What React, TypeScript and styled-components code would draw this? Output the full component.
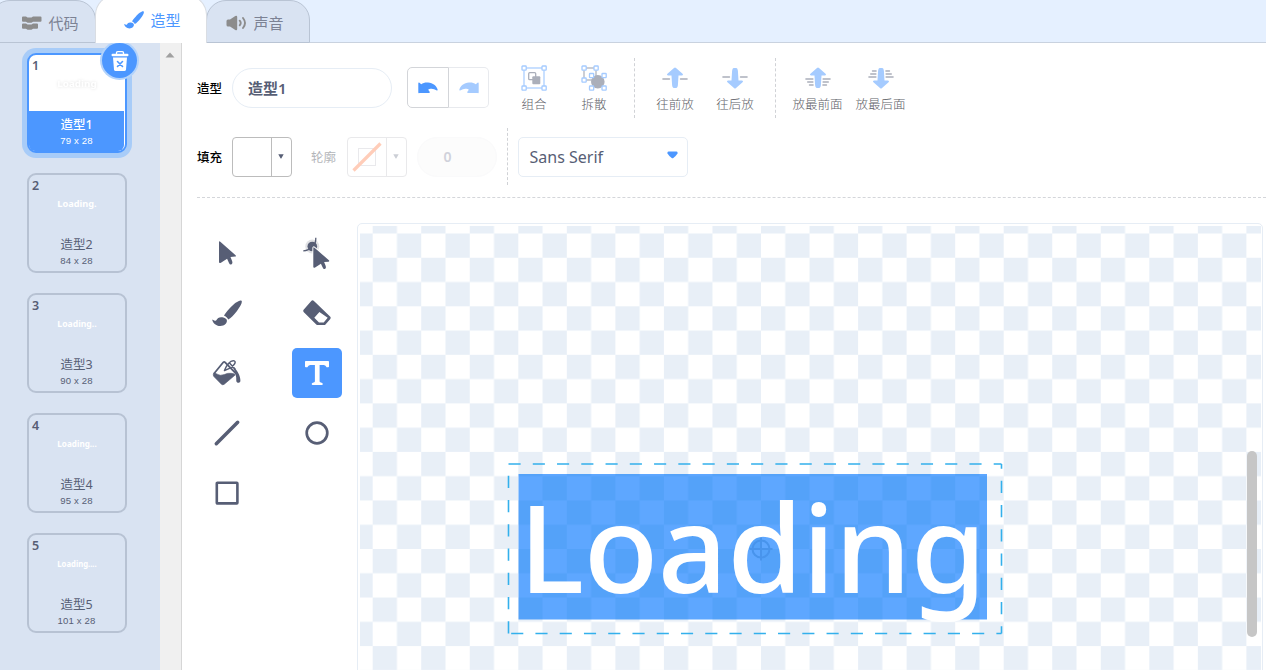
import React from 'react';
import styled, { createGlobalStyle } from 'styled-components';

const INK = '#575e75';
const BLUE = '#4c97ff';

const GlobalStyle = createGlobalStyle`
  * { box-sizing: border-box; }
  body {
    margin: 0;
    overflow: hidden;
    background: #fff;
    font-family: "Noto Sans", "Noto Sans CJK SC", sans-serif;
    color: ${INK};
  }
  svg { display: block; flex: none; }
`;

const Page = styled.div`
  width: 1266px;
  height: 670px;
  display: flex;
  flex-direction: column;
  overflow: hidden;
`;

const TabBar = styled.div`
  height: 43px;
  flex: none;
  display: flex;
  background: #e5f0ff;
  border-bottom: 1px solid #c9d2df;
`;

const Tab = styled.div<{ $width: number; $active?: boolean; $first?: boolean }>`
  width: ${p => p.$width}px;
  height: ${p => (p.$active ? 48 : 43)}px;
  margin-top: ${p => (p.$active ? -5 : 0)}px;
  margin-left: ${p => (p.$first ? -10 : -1)}px;
  padding: ${p => (p.$active ? '0 0 0 3px' : p.$first ? '3px 0 0 14px' : '3px 6px 0 0')};
  display: flex;
  align-items: center;
  justify-content: center;
  gap: ${p => (p.$first ? 5 : 6)}px;
  border: 1px solid ${p => (p.$active ? '#d9dde3' : '#b9c4d4')};
  border-bottom: ${p => (p.$active ? 'none' : '1px solid #b9c4d4')};
  border-radius: 20px 20px 0 0;
  background: ${p => (p.$active ? '#fff' : '#d9e3f2')};
  color: ${p => (p.$active ? BLUE : '#7c8294')};
  font: 400 15px/20px "Noto Sans CJK SC", sans-serif;
  position: relative;
  z-index: ${p => (p.$active ? 2 : 1)};
`;

const Body = styled.div`
  flex: 1;
  display: flex;
  min-height: 0;
`;

const CostumeList = styled.div`
  width: 160px;
  flex: none;
  padding: 10px 0 0 27px;
  display: flex;
  flex-direction: column;
  gap: 20px;
  background: #d9e3f2;
`;

const ListScrollbar = styled.div`
  width: 22px;
  flex: none;
  padding: 9px 0 0 5px;
  background: #f0f0f0;
  border-right: 1px solid #d6d6d6;
`;

const Card = styled.div<{ $selected?: boolean }>`
  position: relative;
  width: 100px;
  height: 100px;
  flex: none;
  display: flex;
  flex-direction: column;
  border: 2px solid ${p => (p.$selected ? BLUE : '#b7c2d3')};
  border-radius: 9px;
  background: ${p => (p.$selected ? '#fff' : 'transparent')};
  box-shadow: ${p => (p.$selected ? '0 0 0 5px #a8ccf8' : 'none')};
  color: ${p => (p.$selected ? '#fff' : INK)};
`;

const CardNumber = styled.div`
  height: 18px;
  padding: 3px 0 0 3px;
  font: 600 12.5px/15px "Noto Sans", sans-serif;
  color: ${INK};
`;

const CardPreview = styled.svg<{ $selected?: boolean }>`
  width: 96px;
  height: 38px;
  font: 700 9px "Noto Sans", sans-serif;
  fill: #fff;
  filter: ${p => (p.$selected ? 'drop-shadow(0 0 1.5px rgba(0,0,0,0.12))' : 'none')};
`;

const CardInfo = styled.div<{ $selected?: boolean }>`
  flex: 1;
  padding-top: 5px;
  margin-right: 1px;
  border-radius: 0 0 6px 6px;
  text-align: center;
  background: ${p => (p.$selected ? BLUE : 'transparent')};
`;

const CardName = styled.div<{ $selected?: boolean }>`
  font: ${p => (p.$selected ? 500 : 400)} 12.5px/18px "Noto Sans", "Noto Sans CJK SC", sans-serif;
`;

const CardSize = styled.div`
  font: 400 9.6px/14px "Liberation Sans", sans-serif;
  letter-spacing: 0.15px;
`;

const DeleteBadge = styled.div`
  position: absolute;
  top: -12px;
  right: -12px;
  width: 35px;
  height: 35px;
  border-radius: 50%;
  display: flex;
  align-items: center;
  justify-content: center;
  background: ${BLUE};
  box-shadow: 0 0 0 2px #b3d3fb;
`;

const Editor = styled.div`
  flex: 1;
  min-width: 0;
  padding-left: 15px;
  display: flex;
  flex-direction: column;
`;

const Toolbar = styled.div`
  height: 155px;
  flex: none;
  padding-top: 15px;
  display: flex;
  flex-direction: column;
  gap: 10px;
  border-bottom: 1px dashed #d4d6da;
`;

const ToolbarRow = styled.div<{ $height: number }>`
  height: ${p => p.$height}px;
  display: flex;
  align-items: center;
`;

const Label = styled.span<{ $muted?: boolean }>`
  width: ${p => (p.$muted ? 36 : 35)}px;
  flex: none;
  margin-left: ${p => (p.$muted ? 19 : 0)}px;
  font: ${p => (p.$muted ? 400 : 500)} 12.5px/18px "Noto Sans CJK SC", sans-serif;
  color: ${p => (p.$muted ? '#b4b6ba' : '#000')};
`;

const NameField = styled.div`
  width: 160px;
  height: 40px;
  padding-left: 15px;
  border: 1px solid #e6edf5;
  border-radius: 20px;
  font: 600 15px/38px "Noto Sans", "Noto Sans CJK SC", sans-serif;
`;

const HistoryGroup = styled.div`
  display: flex;
  margin: -1px 0 0 15px;
`;

const HistoryButton = styled.div<{ $disabled?: boolean }>`
  width: ${p => (p.$disabled ? 40 : 42)}px;
  height: 41px;
  display: flex;
  align-items: center;
  justify-content: center;
  border: 1px solid ${p => (p.$disabled ? '#e8eaee' : '#d3d5d9')};
  border-left-width: ${p => (p.$disabled ? 0 : 1)}px;
  border-radius: ${p => (p.$disabled ? '0 5px 5px 0' : '5px 0 0 5px')};
  color: ${p => (p.$disabled ? '#a5cbff' : BLUE)};
`;

const Actions = styled.div`
  display: flex;
  margin: 0 10px 0 15px;
`;

const Action = styled.div<{ $width?: number }>`
  width: ${p => p.$width ?? 60}px;
  padding-top: 1px;
  display: flex;
  flex-direction: column;
  align-items: center;
  gap: 4px;
  font: 300 12.5px/18px "Noto Sans CJK SC", sans-serif;
  color: #5e6168;
`;

const Separator = styled.div<{ $height: number }>`
  width: 1px;
  height: ${p => p.$height}px;
  border-left: 1px dashed #d0d2d6;
  & + * { margin-left: 10px; }
`;

const Swatch = styled.div<{ $disabled?: boolean }>`
  width: 60px;
  height: 40px;
  display: flex;
  border: 1px solid ${p => (p.$disabled ? '#e9e9eb' : '#bcbcbc')};
  border-radius: 4px;
  color: ${p => (p.$disabled ? '#cccfd6' : INK)};
`;

const SwatchColor = styled.div<{ $disabled?: boolean }>`
  width: 39px;
  display: flex;
  align-items: center;
  justify-content: center;
  border-right: 1px solid ${p => (p.$disabled ? '#e9e9eb' : '#bcbcbc')};
`;

const SwatchArrow = styled.div`
  flex: 1;
  display: flex;
  align-items: center;
  justify-content: center;
  padding: 0 1px 1px 0;
`;

const OutlineWidth = styled.div`
  width: 80px;
  height: 40px;
  margin: 0 10px;
  padding-right: 19px;
  border: 1px solid #fafafb;
  border-radius: 20px;
  background: #fcfcfc;
  text-align: center;
  font: 600 14px/38px "Noto Sans", sans-serif;
  color: #d0d2db;
`;

const FontSelect = styled.div`
  width: 170px;
  height: 40px;
  padding: 0 9px 0 10.5px;
  display: flex;
  align-items: center;
  justify-content: space-between;
  border: 1px solid #e6edf5;
  border-radius: 5px;
  font: 400 16px/38px "Noto Sans", sans-serif;
`;

const SelectArrow = styled.svg`
  width: 11px;
  height: 8px;
  margin-bottom: 3px;
`;

const Workspace = styled.div`
  flex: 1;
  min-height: 0;
  display: flex;
  padding-top: 25px;
`;

const ToolGrid = styled.div`
  width: 160px;
  flex: none;
  display: grid;
  grid-template-columns: 50px 50px;
  grid-auto-rows: 50px;
  gap: 10px 40px;
  padding-left: 5px;
  padding-top: 5px;
  align-content: start;
`;

const ToolButton = styled.div<{ $active?: boolean }>`
  display: flex;
  align-items: center;
  justify-content: center;
  border-radius: 5px;
  background: ${p => (p.$active ? BLUE : 'transparent')};
  color: ${p => (p.$active ? '#fff' : INK)};
`;

const CanvasFrame = styled.div`
  width: 906px;
  height: 460px;
  flex: none;
  padding: 2px;
  border: 1px solid #e6edf5;
  border-radius: 5px;
`;

const CodeIcon = () => (
  <svg width="22" height="16" viewBox="0 0 22 16" fill="#8c8c8c">
    <path d="M2 1.500h3l1.500 1h4l1.500-1h7.500q1 0 1 1v3.300q0 1-1 1H12l-1.500 1h-4L5 6.800H2q-1 0-1-1V2.500q0-1 1-1z" />
    <path d="M2 8.500h3l1.500 1h4l1.500-1h4q1 0 1 1v3.300q0 1-1 1h-4l-1.500 1h-4l-1.500-1H2q-1 0-1-1V9.500q0-1 1-1z" />
  </svg>
);

const BrushIcon = ({ size }: { size: number }) => (
  <svg width={size} height={size * 0.9} viewBox="0 0 30 27" fill="currentColor">
    <path d="M29.500.7C27.500-.5 22 3.500 17.500 8.500c-2.500 2.700-4.700 5.300-5.500 7.200 1.800.5 3.500 2 4.200 3.900 2.500-1.500 6-4.900 8.600-8.400C28.400 6.400 30.800 2 29.500.7z" />
    <path d="M10.400 17.300c-3-.5-5 .7-5.900 2.800C3.800 21.500 2.500 20.500.3 19.500c0 3 3.700 6.600 8 6.600 4.200 0 6.800-2.800 6.600-5.500-.1-1.700-2-3-4.500-3.300z" />
  </svg>
);

const SoundIcon = () => (
  <svg width="21" height="16" viewBox="0 0 21 16" fill="#8c8c8c">
    <path d="M2 4.500h2L9.300.9q1.900-.8 1.900 1v12.200q0 1.800-1.900 1L4 11.500H2Q.5 11.500.5 10V6Q.5 4.500 2 4.500z" />
    <path d="M13.700 5.700q2 2.300 0 4.600M17 3q4 5 0 10" fill="none" stroke="#8c8c8c" strokeWidth="1.900" strokeLinecap="round" />
  </svg>
);

const TrashIcon = () => (
  <svg width="18" height="20" viewBox="0 0 18 20">
    <path d="M5.500 3.300V2q0-1.300 1.300-1.300h4.400Q12.500.7 12.500 2v1.300" fill="none" stroke="#fff" strokeWidth="1.300" />
    <rect x=".5" y="2.800" width="17" height="2.500" rx="1.200" fill="#fff" />
    <path d="M2 6.500h14l-1 12q-.2 1.500-1.700 1.500H4.700Q3.200 20 3 18.500z" fill="#fff" />
    <path d="m6.500 10.500 5 5m0-5-5 5" stroke={BLUE} strokeWidth="1.600" strokeLinecap="round" />
  </svg>
);

const UndoIcon = ({ flip }: { flip?: boolean }) => (
  <svg width="20" height="12" viewBox="0 0 20 12" fill="currentColor">
    <path
      transform={flip ? 'translate(20 0) scale(-1 1)' : undefined}
      d="M.3 1.400Q.3.1 1.500.7l1.700 1.500C5 .8 7.400.3 10 .5c5 .4 8.700 3.400 9.600 7 .2.900-.5 1.300-1.200.8-2.300-1.600-4.700-2-7.100-1.200-1 .3-1.200.8-.6 1.400l.8.900q.9 1-.4 1.600H1.400Q.3 11.600.3 10.300z"
    />
  </svg>
);

const Handle = ({ x, y }: { x: number; y: number }) => (
  <rect x={x - 2} y={y - 2} width="4.200" height="4.200" rx=".6" fill="#fff" stroke="#a5cbff" strokeWidth="1.300" />
);

const GroupIcon = () => (
  <svg width="26" height="26" viewBox="0 0 26 26">
    <rect x="3" y="3" width="20" height="20" fill="none" stroke="#a5cbff" strokeWidth="1.200" />
    <rect x="7.700" y="7.700" width="7" height="7" rx="1" fill="#fff" stroke="#abafba" strokeWidth="1.300" />
    <rect x="11.300" y="11.300" width="8" height="8" rx="1" fill="#abafba" />
    <Handle x={3} y={3} /><Handle x={23} y={3} /><Handle x={3} y={23} /><Handle x={23} y={23} />
  </svg>
);

const UngroupIcon = () => (
  <svg width="26" height="26" viewBox="0 0 26 26">
    <rect x="3" y="3" width="12" height="12" fill="none" stroke="#abafba" strokeWidth="1.200" />
    <circle cx="16.800" cy="16.800" r="6.800" fill="#abafba" />
    <Handle x={3} y={3} /><Handle x={15} y={3} /><Handle x={3} y={15} />
    <Handle x={10.500} y={10.500} /><Handle x={23} y={10.500} /><Handle x={10.500} y={23} /><Handle x={23} y={23} />
  </svg>
);

const UP_ARROW = 'M12 3q1-1 2 0l6.300 5.600q1.700 1.700-.6 2H16.500l-.6 9.600q-.3 2.800-1.500 2.800h-2.800q-1.200 0-1.500-2.800l-.6-9.600H6.300q-2.300-.3-.6-2z';

const ArrowIcon = ({ down, far }: { down?: boolean; far?: boolean }) => (
  <svg width="26" height="26" viewBox="0 0 26 26">
    <g transform={down ? 'rotate(180 13 13)' : undefined}>
      <path d={UP_ARROW} fill="#a5cbff" />
      <path
        d={far ? 'M.9 14h7M2.700 17h5.200M4.500 20h3.600M18.100 14h7M18.100 17h5.200M17.900 20h3.600' : 'M.9 14h6.600M18.500 14h6.600'}
        stroke="#abafba" strokeWidth="1.400" strokeLinecap="round"
      />
    </g>
  </svg>
);

const SmallArrow = () => (
  <svg width="6" height="5" viewBox="0 0 6 5"><path d="M.3.3h5.400L3.300 4.600h-.6z" fill="currentColor" /></svg>
);

const NoColorIcon = () => (
  <svg width="32" height="32" viewBox="0 0 32 32">
    <rect x="7.500" y="7.500" width="17" height="17" fill="none" stroke="#e9e9ec" />
    <path d="M2.500 29.500 29.500 2.500" stroke="#ffcdb9" strokeWidth="3.200" />
  </svg>
);

const CURSOR = 'M0 1.200Q0-.4 1.300.7l15.300 13.500q.9 1.100-.5 1.400l-4.600.4 1.500 3.700q1 2.500-.4 3.500-1.700 1-2.600-1.300L8.100 17.800l-6.200 4Q0 22.600 0 21z';

const SelectIcon = () => (
  <svg width="30" height="30" viewBox="0 0 30 30"><path d={CURSOR} transform="translate(7 3)" fill="currentColor" /></svg>
);

const ReshapeIcon = () => (
  <svg width="34" height="36" viewBox="0 0 34 36">
    <circle cx="12.300" cy="11.500" r="7" fill="#e1e2e5" />
    <circle cx="12.300" cy="11.500" r="4.800" fill="currentColor" />
    <path d="M3.300 15.800q5.500-.2 9-4.300 3.800-2.500 3.500-8.700" fill="none" stroke="currentColor" strokeWidth="1.300" />
    <path d={CURSOR} transform="translate(13.300 12) scale(.94)" fill="currentColor" stroke="#fff" strokeWidth="2" paintOrder="stroke" />
  </svg>
);

const EraserIcon = () => (
  <svg width="30" height="30" viewBox="0 0 30 30" fill="currentColor">
    <path fillRule="evenodd" d="M9.500 2.700q1.100-.8 2.200.1l16.600 16q.9 1 0 2.100l-4.800 5.600q-.6.500-1.300.5h-6.500q-.8 0-1.400-.6L1.600 14q-.9-1.100 0-2.200zM17.400 14l-5.100 5.700 4.700 4.700h4.700l4-4.600z" />
  </svg>
);

const FillIcon = () => (
  <svg width="30" height="30" viewBox="0 0 30 30" fill="none" stroke="currentColor" strokeLinecap="round" strokeLinejoin="round">
    <path d="M2.500 15 11.300 4.300q.9-.9 1.800 0L23.500 15" strokeWidth="1.800" />
    <path d="M1.800 15.200q1.300-.6 3 .8 3.500 2.300 7.500.5 3.500-1.700 7-1.200 3 .3 4.200 1.400L12.300 26.200q-1.500 1.200-2.900 0L1.900 18.600q-1.500-1.600-.1-3.400z" fill="currentColor" strokeWidth=".6" />
    <path d="M12.500 12.500C14 7.500 18.500 1.800 22.200 2.900c3.200 1.300-2 7.100-9.700 9.600M17.500 5 23 11" strokeWidth="1.500" />
    <path d="M20.500 8.500c4.200 2 8.200 9.500 7.900 14.500-.2 2.400-3.900 2.400-4.100 0 .2-4.500-.8-9-3.800-14.500z" fill="currentColor" stroke="none" />
  </svg>
);

const TextIcon = () => (
  <svg width="26" height="26" viewBox="0 0 26 26" fill="currentColor">
    <path d="M1.800 1h22.400q.8 0 .8.800V6.500q0 .7-.8.700h-1.600q-.8-1.900-2.700-2.200h-4.300v16.500q.2 1 2 1.200 1.200.2 1.200 1.200t-1 1.100H8.700q-1-.1-1-1.100t1.200-1.200q1.900-.2 2-1.200V5H6.100Q4.200 5.300 3.400 7.200H1.800Q1 7.200 1 6.500V1.800Q1 1 1.800 1z" />
  </svg>
);

const LineIcon = () => (
  <svg width="30" height="30" viewBox="0 0 30 30"><path d="M4.300 25.700 25.700 4.300" stroke="currentColor" strokeWidth="3.500" strokeLinecap="round" /></svg>
);
const CircleIcon = () => (
  <svg width="30" height="30" viewBox="0 0 30 30"><circle cx="15" cy="15" r="10.300" fill="none" stroke="currentColor" strokeWidth="2.700" /></svg>
);
const RectIcon = () => (
  <svg width="30" height="30" viewBox="0 0 30 30"><rect x="4.800" y="4.800" width="20.600" height="20.600" rx=".6" fill="none" stroke="currentColor" strokeWidth="2.600" /></svg>
);

const ArtText = styled.text`
  font: 500 122px "Noto Sans", sans-serif;
  fill: #fff;
`;

const CELL = 24.27;

const Checker = ({ id, light, dark }: { id: string; light: string; dark: string }) => (
  <pattern id={id} width={CELL * 2} height={CELL * 2} patternUnits="userSpaceOnUse">
    <rect width={CELL * 2} height={CELL * 2} fill={light} />
    <rect width={CELL} height={CELL} fill={dark} />
    <rect x={CELL} y={CELL} width={CELL} height={CELL} fill={dark} />
  </pattern>
);

/* Coordinates inside the artwork are measured from the rotation centre. */
const Artwork = () => (
  <svg width="901" height="460" viewBox="-401 -323 901 460">
    <defs>
      <Checker id="paper" light="#fff" dark="#e8eff7" />
      <Checker id="selection" light="#5ea7ff" dark="#54a2f9" />
    </defs>
    <rect x="-401" y="-323" width="901" height="460" fill="url(#paper)" />
    <rect x="-242.500" y="-75" width="468.500" height="145.500" fill="url(#selection)" />
    <g stroke="#4894ec" strokeWidth="2" fill="none">
      <circle r="8.500" />
      <path d="M0-11.500v23M-11.500 0h23" />
    </g>
    <ArtText x="-242" y="44" textLength="467.500">Loading</ArtText>
    <g stroke="#33b0ec" strokeWidth="1.600" strokeDasharray="12.130 12.130" fill="none">
      <path d="M-252.500-85H240.500" />
      <path d="M-252.500 84.500V-85" />
      <path d="M240.500-85V84.500" strokeDashoffset="7.500" />
      <path d="M240.500 84.500H-252.500" strokeDashoffset="7" />
    </g>
    <rect x="486" y="-98" width="10" height="186" rx="5" fill="#c6c6c6" />
  </svg>
);

const COSTUMES = [
  { preview: 'Loading', name: '造型1', size: '79 x 28' },
  { preview: 'Loading.', name: '造型2', size: '84 x 28' },
  { preview: 'Loading..', name: '造型3', size: '90 x 28' },
  { preview: 'Loading...', name: '造型4', size: '95 x 28' },
  { preview: 'Loading....', name: '造型5', size: '101 x 28' },
];

export default function App() {
  return (
    <Page>
      <GlobalStyle />
      <TabBar>
        <Tab $width={106} $first><CodeIcon />代码</Tab>
        <Tab $width={112} $active><BrushIcon size={20} />造型</Tab>
        <Tab $width={104}><SoundIcon />声音</Tab>
      </TabBar>
      <Body>
        <CostumeList>
          {COSTUMES.map((c, i) => (
            <Card key={c.name} $selected={i === 0}>
              <CardNumber>{i + 1}</CardNumber>
              <CardPreview $selected={i === 0} viewBox="0 0 96 38">
                <text x="28.300" y="13.500" textLength="39.400" lengthAdjust="spacingAndGlyphs">{c.preview}</text>
              </CardPreview>
              <CardInfo $selected={i === 0}>
                <CardName $selected={i === 0}>{c.name}</CardName>
                <CardSize>{c.size}</CardSize>
              </CardInfo>
              {i === 0 && <DeleteBadge><TrashIcon /></DeleteBadge>}
            </Card>
          ))}
        </CostumeList>
        <ListScrollbar>
          <svg width="10" height="6" viewBox="0 0 10 6"><path d="M.5 5.500 5 .5l4.500 5z" fill="#a0a0a0" /></svg>
        </ListScrollbar>
        <Editor>
          <Toolbar>
            <ToolbarRow $height={60}>
              <Label>造型</Label>
              <NameField>造型1</NameField>
              <HistoryGroup>
                <HistoryButton><UndoIcon /></HistoryButton>
                <HistoryButton $disabled><UndoIcon flip /></HistoryButton>
              </HistoryGroup>
              <Actions>
                <Action><GroupIcon />组合</Action>
                <Action><UngroupIcon />拆散</Action>
              </Actions>
              <Separator $height={60} />
              <Actions>
                <Action><ArrowIcon />往前放</Action>
                <Action><ArrowIcon down />往后放</Action>
              </Actions>
              <Separator $height={60} />
              <Actions>
                <Action $width={63}><ArrowIcon far />放最前面</Action>
                <Action $width={63}><ArrowIcon down far />放最后面</Action>
              </Actions>
            </ToolbarRow>
            <ToolbarRow $height={57}>
              <Label>填充</Label>
              <Swatch>
                <SwatchColor />
                <SwatchArrow><SmallArrow /></SwatchArrow>
              </Swatch>
              <Label $muted>轮廓</Label>
              <Swatch $disabled>
                <SwatchColor $disabled><NoColorIcon /></SwatchColor>
                <SwatchArrow><SmallArrow /></SwatchArrow>
              </Swatch>
              <OutlineWidth>0</OutlineWidth>
              <Separator $height={57} />
              <FontSelect>
                Sans Serif
                <SelectArrow viewBox="0 0 11 8">
                  <path d="M1.500.5h8q1.500.3 1 1.900Q8.500 5.500 6.300 7q-.8.500-1.600 0Q2.500 5.500.5 2.400 0 .8 1.500.5z" fill={BLUE} />
                </SelectArrow>
              </FontSelect>
            </ToolbarRow>
          </Toolbar>
          <Workspace>
            <ToolGrid>
              <ToolButton><SelectIcon /></ToolButton>
              <ToolButton><ReshapeIcon /></ToolButton>
              <ToolButton><BrushIcon size={30} /></ToolButton>
              <ToolButton><EraserIcon /></ToolButton>
              <ToolButton><FillIcon /></ToolButton>
              <ToolButton $active><TextIcon /></ToolButton>
              <ToolButton><LineIcon /></ToolButton>
              <ToolButton><CircleIcon /></ToolButton>
              <ToolButton><RectIcon /></ToolButton>
            </ToolGrid>
            <CanvasFrame><Artwork /></CanvasFrame>
          </Workspace>
        </Editor>
      </Body>
    </Page>
  );
}
